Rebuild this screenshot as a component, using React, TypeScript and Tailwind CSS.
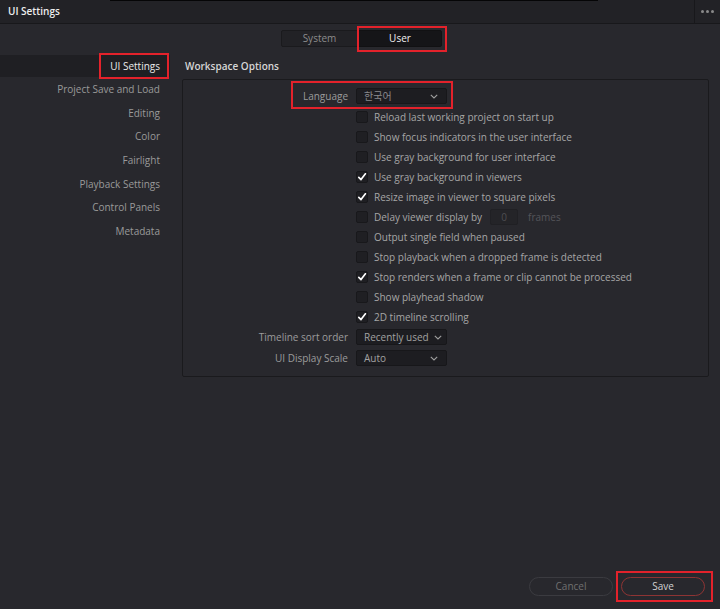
import React from "react";

const Check = () => (
  <svg width="10" height="10" viewBox="0 0 10 10" className="block">
    <path d="M1.8 5.4 L4 7.6 L8.4 1.8" fill="none" stroke="#ffffff" strokeWidth="1.7" strokeLinecap="round" strokeLinejoin="round" />
  </svg>
);

const Chevron = () => (
  <svg width="8" height="5" viewBox="0 0 8 5" className="block">
    <path d="M0.8 0.8 L4 4 L7.2 0.8" fill="none" stroke="#a0a0a0" strokeWidth="1.1" />
  </svg>
);

const RedBox = ({ className }: { className: string }) => (
  <span className={`pointer-events-none absolute border-2 border-[#e3222b] ${className}`} />
);

const Dropdown = ({ value, tight, dim }: { value: string; tight?: boolean; dim?: boolean }) => (
  <div className="flex h-[16px] w-[91px] items-center whitespace-nowrap rounded-[2px] border border-[#17171a] bg-[#1d1d21] pl-[7px] pr-[8px] text-[#a2a2a2]">
    <span className={`${tight ? "" : "flex-1"} ${dim ? "text-[#8a8a8e]" : ""}`}>{value}</span>
    <span className={tight ? "ml-[5px]" : ""}>
      <Chevron />
    </span>
  </div>
);

const CheckRow = ({ label, checked, children }: { label: string; checked?: boolean; children?: React.ReactNode }) => (
  <div className="flex h-[20px] items-center whitespace-nowrap">
    <div className="w-[173px]" />
    <div className="flex h-[12px] w-[12px] items-center justify-center rounded-[2px] border border-[#18181b] bg-[#1f1f23]">
      {checked && <Check />}
    </div>
    <span className="ml-[6px] text-[#a6a6a6]">{label}</span>
    {children}
  </div>
);

const FieldRow = ({ label, children, className }: { label: string; children: React.ReactNode; className?: string }) => (
  <div className={`flex h-[20px] items-center whitespace-nowrap ${className ?? ""}`}>
    <span className="w-[165px] text-right text-[#9c9c9c]">{label}</span>
    <div className="ml-[8px]">{children}</div>
  </div>
);

const sideItems = ["Project Save and Load", "Editing", "Color", "Fairlight", "Playback Settings", "Control Panels", "Metadata"];

export default function App() {
  return (
    <div className="flex h-[609px] w-[720px] flex-col overflow-hidden bg-[#28282d] text-[10px] font-['Open_Sans','Noto_Sans_CJK_KR',sans-serif]">
      <div className="relative flex h-[24px] items-center border-b border-[#18181b] bg-[#222226]">
        <span className="absolute left-[110px] top-0 h-px w-[488px] bg-[#050506]" />
        <span className="flex-1 pl-[8px] font-semibold text-[#eeeeee]">UI Settings</span>
        <div className="flex h-full w-[26px] items-center justify-center gap-[2px] border-l border-[#18181b]">
          <span className="h-[3px] w-[3px] rounded-full bg-[#8a8a8a]" />
          <span className="h-[3px] w-[3px] rounded-full bg-[#8a8a8a]" />
          <span className="h-[3px] w-[3px] rounded-full bg-[#8a8a8a]" />
        </div>
      </div>

      <div className="mt-[6px] flex pl-[281px]">
        <div className="flex h-[17px] w-[77px] items-center justify-center rounded-l-[2px] border border-[#1a1a1d] bg-[#222226] text-[#8c8c8c]">
          System
        </div>
        <div className="relative flex h-[17px] w-[84px] items-center justify-center rounded-r-[2px] border border-[#111113] bg-[#151518] text-[#f0f0f0]">
          User
          <RedBox className="-left-[2px] -right-[6px] -top-[5px] -bottom-[6px]" />
        </div>
      </div>

      <div className="mt-[8px] flex flex-1">
        <div className="flex w-[170px] flex-col">
          <div className="flex h-[22px] items-center justify-end bg-[#1f1f23] pr-[10px]">
            <span className="relative text-[#ececec]">
              UI Settings
              <RedBox className="-left-[11px] -right-[9px] -top-[6px] -bottom-[5px]" />
            </span>
          </div>
          <div className="flex flex-col pt-[1px]">
            {sideItems.map((item) => (
              <div key={item} className="flex h-[23.6px] items-center justify-end pr-[10px] text-[#9a9a9a]">
                {item}
              </div>
            ))}
          </div>
        </div>

        <div className="ml-[12px] flex w-[527px] flex-col">
          <div className="flex h-[22px] items-center pl-[3px] font-semibold text-[#d6d6d6]">Workspace Options</div>
          <div className="mt-[2px] flex flex-col rounded-[2px] border border-[#1a1a1d] pb-[8px] pt-[6px]">
            <FieldRow label="Language" className="relative w-[264px]">
              <Dropdown value="한국어" dim />
              <RedBox className="left-[108px] -right-[6px] -top-[5px] -bottom-[3px]" />
            </FieldRow>
            <div className="mt-[1px]" />
            <CheckRow label="Reload last working project on start up" />
            <CheckRow label="Show focus indicators in the user interface" />
            <CheckRow label="Use gray background for user interface" />
            <CheckRow label="Use gray background in viewers" checked />
            <CheckRow label="Resize image in viewer to square pixels" checked />
            <CheckRow label="Delay viewer display by">
              <div className="ml-[8px] flex h-[16px] w-[28px] items-center justify-center rounded-[2px] border border-[#202024] bg-[#242428] text-[#4e4e52]">
                0
              </div>
              <span className="ml-[10px] text-[#55555a]">frames</span>
            </CheckRow>
            <CheckRow label="Output single field when paused" />
            <CheckRow label="Stop playback when a dropped frame is detected" />
            <CheckRow label="Stop renders when a frame or clip cannot be processed" checked />
            <CheckRow label="Show playhead shadow" />
            <CheckRow label="2D timeline scrolling" checked />
            <FieldRow label="Timeline sort order">
              <Dropdown value="Recently used" tight />
            </FieldRow>
            <FieldRow label="UI Display Scale" className="mt-[1px]">
              <Dropdown value="Auto" />
            </FieldRow>
          </div>
        </div>
      </div>

      <div className="flex justify-end gap-[8px] pb-[13px] pr-[15px]">
        <div className="flex h-[19px] w-[84px] items-center justify-center rounded-full border border-[#3b3b40] text-[#707070]">
          Cancel
        </div>
        <div className="relative flex h-[19px] w-[84px] items-center justify-center rounded-full border border-[#8e3434] text-[#d2d2d2]">
          Save
          <RedBox className="-left-[6px] -right-[9px] -top-[7px] -bottom-[7px]" />
        </div>
      </div>
    </div>
  );
}
